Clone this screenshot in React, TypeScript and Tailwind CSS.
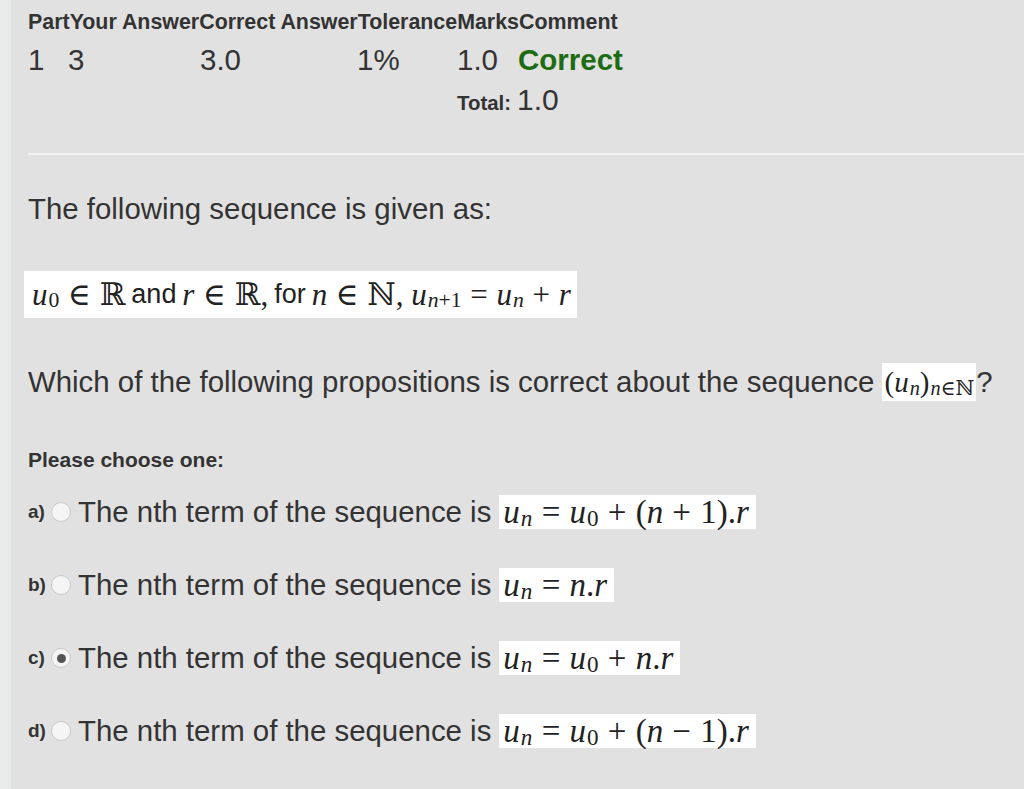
import React from 'react';

const sans = { fontFamily: '"Liberation Sans", Arial, sans-serif' };
const serif = { fontFamily: '"Liberation Serif", "DejaVu Serif", serif' };

function V({ children }: { children: React.ReactNode }) {
  return <i className="italic">{children}</i>;
}

function Sub({ children }: { children: React.ReactNode }) {
  return <span className="text-[0.7em] relative top-[0.28em] ml-[1px]">{children}</span>;
}

function Op({ children }: { children: React.ReactNode }) {
  return <span className="mx-[0.28em]">{children}</span>;
}

function MathBox({ children, className = '' }: { children: React.ReactNode; className?: string }) {
  return (
    <span className={`inline-flex items-center bg-white leading-none text-[#222] whitespace-nowrap ${className}`} style={serif}>
      {children}
    </span>
  );
}

const options = [
  {
    label: 'a)',
    checked: false,
    math: (
      <>
        <V>u</V><Sub><V>n</V></Sub><Op>=</Op><V>u</V><Sub>0</Sub><Op>+</Op>(<V>n</V><Op>+</Op>1).<V>r</V>
      </>
    ),
  },
  {
    label: 'b)',
    checked: false,
    math: (
      <>
        <V>u</V><Sub><V>n</V></Sub><Op>=</Op><V>n</V>.<V>r</V>
      </>
    ),
  },
  {
    label: 'c)',
    checked: true,
    math: (
      <>
        <V>u</V><Sub><V>n</V></Sub><Op>=</Op><V>u</V><Sub>0</Sub><Op>+</Op><V>n</V>.<V>r</V>
      </>
    ),
  },
  {
    label: 'd)',
    checked: false,
    math: (
      <>
        <V>u</V><Sub><V>n</V></Sub><Op>=</Op><V>u</V><Sub>0</Sub><Op>+</Op>(<V>n</V><Op>−</Op>1).<V>r</V>
      </>
    ),
  },
];

export default function App() {
  return (
    <div className="w-[1024px] h-[789px] overflow-hidden flex bg-[#e1e1e1] text-[#333]" style={sans}>
      {/* left strip */}
      <div className="w-[11px] shrink-0 bg-[#eaecec]" />

      <div className="flex-1 pl-[17px]">
        {/* result table */}
        <div className="pt-[10px]">
          <div className="flex font-bold text-[21.4px] leading-[24px] text-[#333] whitespace-nowrap">
            <span>Part</span>
            <span>Your Answer</span>
            <span>Correct Answer</span>
            <span>Tolerance</span>
            <span>Marks</span>
            <span>Comment</span>
          </div>
          <div className="flex items-baseline text-[29.5px] leading-[36px] mt-[8px] whitespace-nowrap">
            <span className="w-[40px] shrink-0">1</span>
            <span className="w-[132px] shrink-0">3</span>
            <span className="w-[157px] shrink-0">3.0</span>
            <span className="w-[100px] shrink-0">1%</span>
            <span className="w-[61px] shrink-0">1.0</span>
            <span className="font-bold text-[#1d6b12]">Correct</span>
          </div>
          <div className="flex items-baseline ml-[429px] mt-[4px] h-[36px]">
            <span className="font-bold text-[20.4px] mr-[6px]">Total:</span>
            <span className="text-[30px] leading-[36px]">1.0</span>
          </div>
        </div>

        <div className="h-[2px] bg-[#f2f2f2] mt-[35px]" />

        <p className="text-[29.4px] leading-[36px] mt-[36px]">The following sequence is given as:</p>

        <div className="mt-[44px] -ml-[4px] flex">
          <MathBox className="h-[47px] text-[31px] pl-[8px] pr-[6px]">
            <V>u</V><Sub>0</Sub><Op>∈</Op>ℝ<span className="mx-[0.22em] text-[27px]" style={sans}>and</span><V>r</V><Op>∈</Op>ℝ,
            <span className="mx-[0.22em] text-[27px]" style={sans}>for</span><V>n</V><Op>∈</Op>ℕ,&nbsp;<V>u</V>
            <Sub><V>n</V>+1</Sub><Op>=</Op><V>u</V><Sub><V>n</V></Sub><Op>+</Op><V>r</V>
          </MathBox>
        </div>

        <div className="text-[29.4px] leading-[40px] mt-[44px] flex items-center h-[40px]">
          <span className="whitespace-nowrap">Which of the following propositions is correct about the sequence&nbsp;</span>
          <MathBox className="h-[38px] text-[29px] px-[2px]">
            (<V>u</V><Sub><V>n</V></Sub>)<Sub><V>n</V>∈ℕ</Sub>
          </MathBox>
          <span>?</span>
        </div>

        <p className="font-bold text-[21px] leading-[26px] mt-[45px]">Please choose one:</p>

        <div className="mt-[21px] flex flex-col gap-[37px]">
          {options.map((o) => (
            <div key={o.label} className="flex items-center h-[36px]">
              <span className="font-bold text-[19px] w-[23px]">{o.label}</span>
              <span className="w-[20px] h-[20px] rounded-full border border-[#c8c8c8] bg-[#f5f5f5] flex items-center justify-center shrink-0">
                {o.checked && <span className="w-[9px] h-[9px] rounded-full bg-[#555]" />}
              </span>
              <span className="text-[29.4px] ml-[7px] mr-[8px] whitespace-nowrap">The nth term of the sequence is</span>
              <MathBox className="h-[34px] text-[33px] pl-[4px] pr-[7px]">{o.math}</MathBox>
            </div>
          ))}
        </div>
      </div>
    </div>
  );
}
